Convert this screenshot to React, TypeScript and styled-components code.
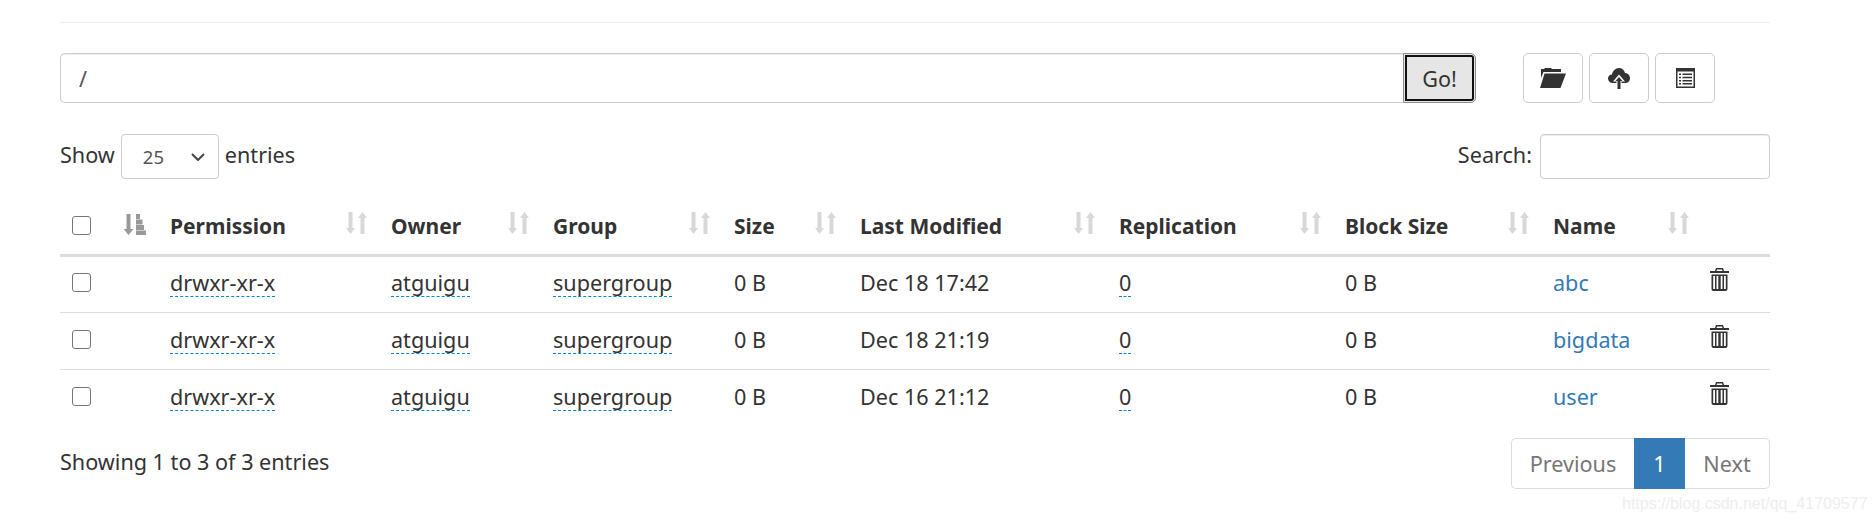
import React from 'react'
import styled, { createGlobalStyle } from 'styled-components'

const GlobalStyle = createGlobalStyle`
  html, body {
    margin: 0;
    padding: 0;
    background: #fff;
  }
  body {
    font-family: "Noto Sans", "Open Sans", "Liberation Sans", sans-serif;
    font-size: 21.6px;
    color: #333;
  }
`

const Page = styled.div`
  position: relative;
  box-sizing: border-box;
  width: 1875px;
  height: 522px;
  padding: 22px 105px 0 60px;
  overflow: hidden;
`

const Rule = styled.div`
  height: 1px;
  background: #eee;
`

const Toolbar = styled.div`
  display: flex;
  margin-top: 30px;
  height: 50px;
`

const PathGroup = styled.div`
  display: flex;
  width: 1416px;
  margin-right: 47px;
`

const PathInput = styled.input`
  flex: 1;
  min-width: 0;
  box-sizing: border-box;
  height: 50px;
  padding: 0 18px;
  border: 1px solid #ccc;
  border-right: 0;
  border-radius: 5px 0 0 5px;
  box-shadow: inset 0 1px 1px rgba(0, 0, 0, 0.075);
  font: inherit;
  color: #555;
  outline: none;
`

const GoButton = styled.button`
  box-sizing: border-box;
  width: 73px;
  height: 50px;
  padding: 0;
  background: #e6e6e6;
  border: 1px solid #8c8c8c;
  border-radius: 0 5px 5px 0;
  outline: 2px solid #111;
  outline-offset: -4px;
  font: inherit;
  color: #333;
`

const IconGroup = styled.div`
  display: flex;
  gap: 6px;
`

const IconButton = styled.button`
  display: flex;
  align-items: center;
  justify-content: center;
  box-sizing: border-box;
  width: 60px;
  height: 50px;
  padding: 0;
  background: #fff;
  border: 1px solid #ccc;
  border-radius: 5px;
`

const Controls = styled.div`
  display: flex;
  align-items: center;
  justify-content: space-between;
  margin-top: 31px;
  height: 45px;
`

const ControlText = styled.span`
  margin-bottom: 4px;
`

const LengthLabel = styled.label`
  display: flex;
  align-items: center;
  gap: 6px;
`

const SelectWrap = styled.span`
  position: relative;
  display: block;
  width: 98px;
  height: 45px;
`

const LengthSelect = styled.select`
  appearance: none;
  display: block;
  box-sizing: border-box;
  width: 100%;
  height: 100%;
  padding: 0 18px 0 21px;
  background: #fff;
  border: 1px solid #ccc;
  border-radius: 4px;
  font: inherit;
  font-size: 18.5px;
  color: #555;
`

const Chevron = styled.svg`
  position: absolute;
  top: 19px;
  right: 14px;
  pointer-events: none;
`

const SearchLabel = styled.label`
  display: flex;
  align-items: center;
  gap: 8px;
`

const SearchInput = styled.input`
  box-sizing: border-box;
  width: 230px;
  height: 45px;
  border: 1px solid #ccc;
  border-radius: 4px;
  box-shadow: inset 0 1px 1px rgba(0, 0, 0, 0.075);
`

const Table = styled.table`
  width: 1710px;
  margin-top: 21px;
  table-layout: fixed;
  border-collapse: collapse;
`

const HeadCell = styled.th`
  position: relative;
  box-sizing: border-box;
  height: 55px;
  padding: 0 12px 2px;
  border-bottom: 3px solid #ddd;
  text-align: left;
  font-size: 21px;
  font-weight: 700;
  white-space: nowrap;
`

const SortIcon = styled.svg`
  position: absolute;
  top: 12px;
  right: 12px;
`

const AttributesIcon = styled.svg`
  display: block;
  margin-top: -2px;
`

const Row = styled.tr`
  & + & td {
    border-top: 1px solid #ddd;
  }
`

const Cell = styled.td`
  box-sizing: border-box;
  height: 57px;
  padding: 0 12px 3px;
  white-space: nowrap;
`

const Check = styled.input.attrs({ type: 'checkbox' })`
  display: block;
  appearance: none;
  box-sizing: border-box;
  width: 19px;
  height: 19px;
  margin: 0;
  background: #fff;
  border: 1px solid #767676;
  border-radius: 3px;
`

const Dashed = styled.span`
  display: inline-block;
  line-height: 26px;
  border-bottom: 1px dashed #08c;
`

const NameLink = styled.a`
  color: #337ab7;
  text-decoration: none;
`

const TrashWrap = styled.span`
  display: block;
  height: 23px;
  margin: -6px 0 0 -3px;
`

const Footer = styled.div`
  display: flex;
  align-items: center;
  justify-content: space-between;
  margin-top: 12px;
`

const Pager = styled.div`
  display: flex;
  height: 51px;
  box-sizing: border-box;
`

const PageItem = styled.a<{ $active?: boolean; $width: number }>`
  display: flex;
  align-items: center;
  justify-content: center;
  box-sizing: border-box;
  width: ${(p) => p.$width}px;
  color: ${(p) => (p.$active ? '#fff' : '#777')};
  background: ${(p) => (p.$active ? '#337ab7' : '#fff')};
  border: 1px solid ${(p) => (p.$active ? '#337ab7' : '#ddd')};
  &:first-child {
    border-right: 0;
    border-radius: 5px 0 0 5px;
  }
  &:last-child {
    border-left: 0;
    border-radius: 0 5px 5px 0;
  }
`

const Watermark = styled.span`
  position: absolute;
  left: 1622px;
  top: 495px;
  font-family: "Liberation Sans", sans-serif;
  font-size: 16px;
  color: #eee;
  white-space: nowrap;
`

const dark = '#333'

const FolderIcon = () => (
  <svg width="26" height="20" viewBox="0 0 26 20" fill={dark}>
    <path d="M1 1h3l1-1h6l1 1h9v3H3.500L1 10z" />
    <path d="M4.500 5.500H26L20.500 20H0z" />
  </svg>
)

const CloudIcon = () => (
  <svg width="22" height="21" viewBox="0 0 22 21">
    <path
      fill={dark}
      d="M5 15C2 15 0 13 0 10.500S2 6.500 4 6.500C4.500 3 7.500 0 11 0c3 0 5.500 2 6 5 2.800 0 5 2.400 5 5.200S20 15 17 15z"
    />
    <path fill="#fff" d="M11 6.500l6 7h-3.500V21h-5v-7.500H5z" />
    <path fill={dark} d="M11 9l3.500 4H12.500v8h-3v-8H7.500z" />
  </svg>
)

const ListIcon = () => (
  <svg width="19" height="20" viewBox="0 0 19 20">
    <rect width="19" height="20" fill={dark} />
    <rect x="1.500" y="3.500" width="16" height="15" fill="#fff" />
    <path
      fill={dark}
      d="M3 5.500h2V7H3zM6.500 5.500H16V7H6.500zM3 8.700h2v1.500H3zM6.500 8.700H16v1.500H6.500zM3 11.900h2v1.500H3zM6.500 11.900H16v1.500H6.500zM3 15h2v1.500H3zM6.500 15H16v1.500H6.500z"
    />
  </svg>
)

const TrashIcon = () => (
  <svg width="19" height="23" viewBox="0 0 19 23" fill={dark}>
    <path d="M6 0h7l1 3h5v2H0V3h5zM7 1.500L6.500 3h6L12 1.500z" fillRule="evenodd" />
    <path
      fillRule="evenodd"
      d="M1.500 6.500h16V21a2 2 0 0 1-2 2h-12a2 2 0 0 1-2-2zM3.200 8v13h1.800V8zM6.500 8v13h1.800V8zM10.700 8v13h1.800V8zM14 8v13h1.800V8z"
    />
  </svg>
)

const SortBoth = () => (
  <SortIcon width="21" height="22" viewBox="0 0 21 22" fill="#d8d8d8">
    <path d="M2.500 0h4v16H9l-4.500 6L0 16h2.500z" />
    <path d="M16.500 0L21 6h-2.500v16h-4V6H12z" />
  </SortIcon>
)

const SortAttributes = () => (
  <AttributesIcon width="22" height="21" viewBox="0 0 22 21" fill="#999">
    <path d="M2.500 0h4v15H9.500L4.500 21-.5 15h3z" />
    <path d="M12 0h4v5h-4zM12 5.500h6.500V10.500H12zM12 11h8v5h-8zM12 16.500h10V21H12z" />
  </AttributesIcon>
)

const columns = [
  { width: 52 },
  { width: 46 },
  { width: 221, label: 'Permission' },
  { width: 162, label: 'Owner' },
  { width: 181, label: 'Group' },
  { width: 126, label: 'Size' },
  { width: 259, label: 'Last Modified' },
  { width: 226, label: 'Replication' },
  { width: 208, label: 'Block Size' },
  { width: 160, label: 'Name' },
  { width: 69 },
]

const rows = [
  { modified: 'Dec 18 17:42', name: 'abc' },
  { modified: 'Dec 18 21:19', name: 'bigdata' },
  { modified: 'Dec 16 21:12', name: 'user' },
]

export default function App() {
  return (
    <Page>
      <GlobalStyle />
      <Rule />
      <Toolbar>
        <PathGroup>
          <PathInput defaultValue="/" />
          <GoButton>Go!</GoButton>
        </PathGroup>
        <IconGroup>
          <IconButton><FolderIcon /></IconButton>
          <IconButton><CloudIcon /></IconButton>
          <IconButton><ListIcon /></IconButton>
        </IconGroup>
      </Toolbar>
      <Controls>
        <LengthLabel>
          <ControlText>Show</ControlText>
          <SelectWrap>
            <LengthSelect defaultValue="25">
              <option>10</option>
              <option>25</option>
              <option>50</option>
              <option>100</option>
            </LengthSelect>
            <Chevron width="14" height="8" viewBox="0 0 14 8" fill="none" stroke="#444" strokeWidth="2">
              <path d="M1 1l6 6 6-6" />
            </Chevron>
          </SelectWrap>
          <ControlText>entries</ControlText>
        </LengthLabel>
        <SearchLabel>
          <ControlText>Search:</ControlText>
          <SearchInput />
        </SearchLabel>
      </Controls>
      <Table>
        <colgroup>
          {columns.map((c, i) => (
            <col key={i} width={c.width} />
          ))}
        </colgroup>
        <thead>
          <tr>
            <HeadCell><Check /></HeadCell>
            <HeadCell><SortAttributes /></HeadCell>
            {columns.slice(2, 10).map((c) => (
              <HeadCell key={c.label}>
                {c.label}
                <SortBoth />
              </HeadCell>
            ))}
            <HeadCell />
          </tr>
        </thead>
        <tbody>
          {rows.map((r) => (
            <Row key={r.name}>
              <Cell><Check /></Cell>
              <Cell />
              <Cell><Dashed>drwxr-xr-x</Dashed></Cell>
              <Cell><Dashed>atguigu</Dashed></Cell>
              <Cell><Dashed>supergroup</Dashed></Cell>
              <Cell>0 B</Cell>
              <Cell>{r.modified}</Cell>
              <Cell><Dashed>0</Dashed></Cell>
              <Cell>0 B</Cell>
              <Cell><NameLink>{r.name}</NameLink></Cell>
              <Cell><TrashWrap><TrashIcon /></TrashWrap></Cell>
            </Row>
          ))}
        </tbody>
      </Table>
      <Footer>
        <ControlText>Showing 1 to 3 of 3 entries</ControlText>
        <Pager>
          <PageItem $width={123}>Previous</PageItem>
          <PageItem $width={51} $active>1</PageItem>
          <PageItem $width={85}>Next</PageItem>
        </Pager>
      </Footer>
      <Watermark>https://blog.csdn.net/qq_41709577</Watermark>
    </Page>
  )
}
